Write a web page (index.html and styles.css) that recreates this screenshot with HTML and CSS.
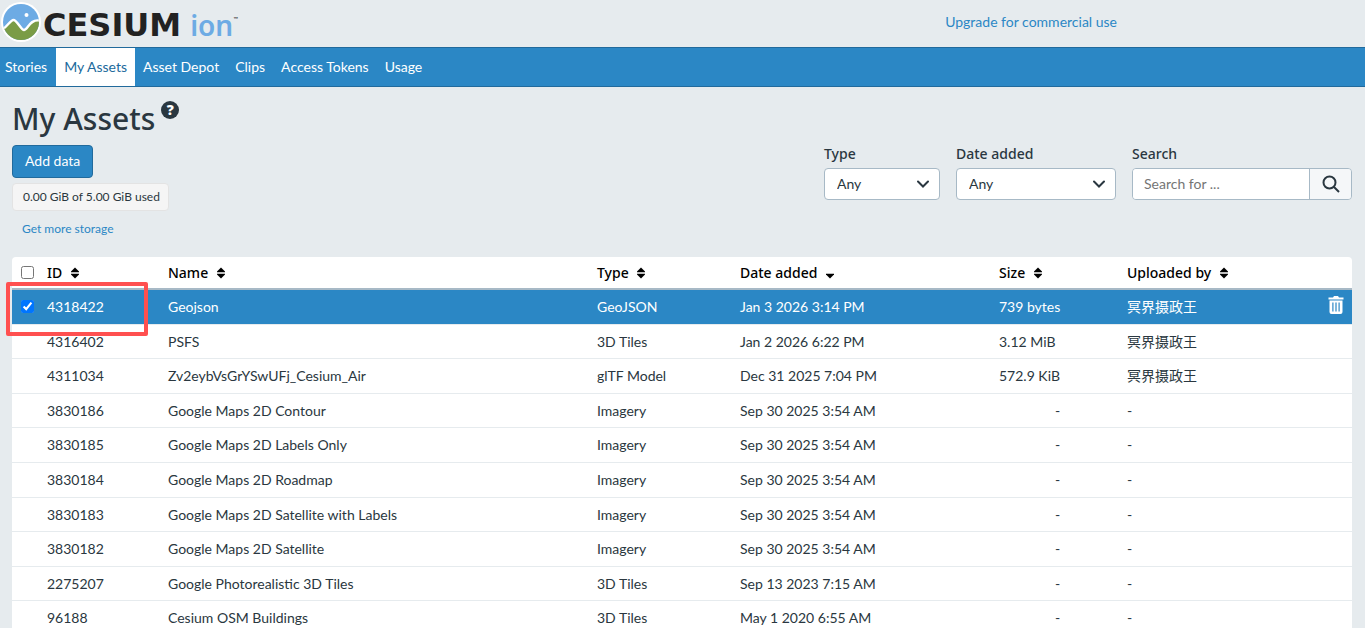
FILE: index.html
```html
<!DOCTYPE html>
<html lang="en">
<head>
    <meta charset="UTF-8">
    <meta name="viewport" content="width=device-width, initial-scale=1.0">
    <title>My Assets | Cesium ion</title>
    <link rel="stylesheet" href="styles.css">
</head>
<body>
    <!-- Shared icons -->
    <svg class="icon-defs" aria-hidden="true">
        <symbol id="icon-sort" viewBox="0 0 8 12">
            <path d="M4 0.5 L8 4.5 V5.2 H0 V4.5 Z M0 6.8 H8 V7.5 L4 11.5 L0 7.5 Z"/>
        </symbol>
        <symbol id="icon-sort-down" viewBox="0 0 8 12">
            <path d="M0 6.8 H8 V7.5 L4 11.5 L0 7.5 Z"/>
        </symbol>
    </svg>

    <header class="top-bar">
        <a class="logo" href="#" aria-label="Cesium ion">
            <svg class="logo-mark" viewBox="0 0 40 40" aria-hidden="true">
                <defs>
                    <clipPath id="globe"><circle cx="20" cy="20" r="18"/></clipPath>
                </defs>
                <circle cx="20" cy="20" r="20" fill="#fff"/>
                <g clip-path="url(#globe)">
                    <rect width="40" height="40" fill="#6dabe4"/>
                    <path d="M0 28 C5 27 9 18 12.5 18 C16 18 20 28 23 28 C26.500 28 29 17 38 18.500 L40 40 H0 Z" fill="#7a9c46"/>
                    <path d="M0 28 C5 27 9 18 12.5 18 C16 18 20 28 23 28 C26.500 28 29 17 38 18.500" fill="none" stroke="#fff" stroke-width="2.4"/>
                </g>
                <circle cx="25.500" cy="13" r="2" fill="#fff"/>
            </svg>
            <span class="logo-name">CESIUM</span>
            <span class="logo-product">ion</span>
            <span class="logo-tm">™</span>
        </a>
        <a class="upgrade-link" href="#">Upgrade for commercial use</a>
    </header>

    <nav class="main-nav">
        <a href="#">Stories</a>
        <a class="active" href="#">My Assets</a>
        <a href="#">Asset Depot</a>
        <a href="#">Clips</a>
        <a href="#">Access Tokens</a>
        <a href="#">Usage</a>
    </nav>

    <main class="content">
        <div class="page-title">
            <h1>My Assets</h1>
            <button class="help-btn" type="button" aria-label="Help">?</button>
        </div>

        <div class="toolbar">
            <div class="storage">
                <button class="add-btn" type="button">Add data</button>
                <span class="usage">0.00 GiB of 5.00 GiB used</span>
                <a class="more-link" href="#">Get more storage</a>
            </div>
            <form class="filters">
                <div class="form-group type-group">
                    <label for="type">Type</label>
                    <div class="select-box">
                        <select id="type"><option>Any</option></select>
                        <svg viewBox="0 0 12 8" aria-hidden="true"><path d="M1 1.5 L6 6.5 L11 1.5"/></svg>
                    </div>
                </div>
                <div class="form-group date-group">
                    <label for="date">Date added</label>
                    <div class="select-box">
                        <select id="date"><option>Any</option></select>
                        <svg viewBox="0 0 12 8" aria-hidden="true"><path d="M1 1.5 L6 6.5 L11 1.5"/></svg>
                    </div>
                </div>
                <div class="form-group search-group">
                    <label for="search">Search</label>
                    <div class="search-box">
                        <input type="text" id="search" placeholder="Search for ...">
                        <button type="submit" aria-label="Search">
                            <svg viewBox="0 0 18 18" aria-hidden="true"><circle cx="7.5" cy="7.5" r="6"/><path d="M12 12 L17 17"/></svg>
                        </button>
                    </div>
                </div>
            </form>
        </div>

        <div class="assets">
            <table>
                <colgroup>
                    <col class="col-check">
                    <col class="col-id">
                    <col class="col-name">
                    <col class="col-type">
                    <col class="col-date">
                    <col class="col-size">
                    <col class="col-user">
                    <col class="col-action">
                </colgroup>
                <thead>
                    <tr>
                        <th class="check"><input type="checkbox" aria-label="Select all"></th>
                        <th>ID <svg class="sort"><use href="#icon-sort"/></svg></th>
                        <th>Name <svg class="sort"><use href="#icon-sort"/></svg></th>
                        <th>Type <svg class="sort"><use href="#icon-sort"/></svg></th>
                        <th>Date added <svg class="sort"><use href="#icon-sort-down"/></svg></th>
                        <th>Size <svg class="sort"><use href="#icon-sort"/></svg></th>
                        <th>Uploaded by <svg class="sort"><use href="#icon-sort"/></svg></th>
                        <th></th>
                    </tr>
                </thead>
                <tbody>
                    <tr class="selected">
                        <td class="check"><input type="checkbox" aria-label="Select Geojson" checked></td>
                        <td>4318422</td>
                        <td>Geojson</td>
                        <td>GeoJSON</td>
                        <td>Jan 3 2026 3:14 PM</td>
                        <td>739 bytes</td>
                        <td>冥界摄政王</td>
                        <td class="action">
                            <button class="delete-btn" type="button" aria-label="Delete">
                                <svg viewBox="0 0 16 18" aria-hidden="true">
                                    <path d="M0.5 1.5 H5 L6 0 H10 L11 1.5 H15.5 V3.5 H0.5 Z"/>
                                    <path fill-rule="evenodd" d="M1.5 4.5 H14.5 V16 Q14.5 18 12.5 18 H3.5 Q1.5 18 1.5 16 Z M4.3 6.5 V15.5 H5.5 V6.5 Z M7.4 6.5 V15.5 H8.6 V6.5 Z M10.5 6.5 V15.5 H11.7 V6.5 Z"/>
                                </svg>
                            </button>
                        </td>
                    </tr>
                    <tr><td></td><td>4316402</td><td>PSFS</td><td>3D Tiles</td><td>Jan 2 2026 6:22 PM</td><td>3.12 MiB</td><td>冥界摄政王</td><td></td></tr>
                    <tr><td></td><td>4311034</td><td>Zv2eybVsGrYSwUFj_Cesium_Air</td><td>glTF Model</td><td>Dec 31 2025 7:04 PM</td><td>572.9 KiB</td><td>冥界摄政王</td><td></td></tr>
                    <tr><td></td><td>3830186</td><td>Google Maps 2D Contour</td><td>Imagery</td><td>Sep 30 2025 3:54 AM</td><td class="empty">-</td><td>-</td><td></td></tr>
                    <tr><td></td><td>3830185</td><td>Google Maps 2D Labels Only</td><td>Imagery</td><td>Sep 30 2025 3:54 AM</td><td class="empty">-</td><td>-</td><td></td></tr>
                    <tr><td></td><td>3830184</td><td>Google Maps 2D Roadmap</td><td>Imagery</td><td>Sep 30 2025 3:54 AM</td><td class="empty">-</td><td>-</td><td></td></tr>
                    <tr><td></td><td>3830183</td><td>Google Maps 2D Satellite with Labels</td><td>Imagery</td><td>Sep 30 2025 3:54 AM</td><td class="empty">-</td><td>-</td><td></td></tr>
                    <tr><td></td><td>3830182</td><td>Google Maps 2D Satellite</td><td>Imagery</td><td>Sep 30 2025 3:54 AM</td><td class="empty">-</td><td>-</td><td></td></tr>
                    <tr><td></td><td>2275207</td><td>Google Photorealistic 3D Tiles</td><td>3D Tiles</td><td>Sep 13 2023 7:15 AM</td><td class="empty">-</td><td>-</td><td></td></tr>
                    <tr><td></td><td>96188</td><td>Cesium OSM Buildings</td><td>3D Tiles</td><td>May 1 2020 6:55 AM</td><td class="empty">-</td><td>-</td><td></td></tr>
                </tbody>
            </table>
            <!-- Frame around the selected ID -->
            <div class="highlight"></div>
        </div>
    </main>
</body>
</html>
```
FILE: styles.css
```css
* {
    box-sizing: border-box;
}
html {
    scrollbar-width: none;
}
body {
    margin: 0;
    font-family: Lato, "Noto Sans CJK SC", sans-serif;
    font-size: 14px;
    line-height: 1.4;
    color: #2a3740;
    background-color: #e6ebee;
}
a {
    color: #2b87c5;
    text-decoration: none;
}
button, input, select {
    font: inherit;
    color: inherit;
}
button {
    cursor: pointer;
}
.icon-defs {
    display: none;
}

/* Top bar */
.top-bar {
    display: flex;
    justify-content: space-between;
    align-items: center;
    height: 47px;
    padding: 0 248px 3px 1px;
}
.logo {
    display: flex;
    align-items: center;
    color: #222;
}
.logo-mark {
    width: 40px;
    height: 40px;
    margin-right: 2px;
}
.logo-name {
    padding-top: 6px;
    font-family: "DejaVu Sans", sans-serif;
    font-size: 32px;
    font-weight: bold;
    line-height: 38px;
}
.logo-product {
    margin-left: 9px;
    padding-top: 6px;
    font-family: "Noto Sans", sans-serif;
    font-size: 28px;
    font-weight: 600;
    line-height: 38px;
    color: #6dabe4;
}
.logo-tm {
    align-self: flex-start;
    font-size: 6px;
    line-height: 38px;
}

/* Navigation */
.main-nav {
    display: flex;
    height: 40px;
    background-color: #2b87c5;
    border-top: 1px solid #216a9c;
    border-bottom: 1px solid #216a9c;
}
.main-nav a {
    padding: 0 8px;
    line-height: 38px;
    color: #fff;
}
.main-nav a:first-child {
    padding-left: 5px;
    padding-right: 9px;
}
.main-nav a.active {
    background-color: #fff;
    color: #216a9c;
}

/* Page head */
.content {
    padding: 12px 13px 0 12px;
}
.page-title {
    display: flex;
    align-items: flex-start;
    gap: 6px;
}
.page-title h1 {
    margin: 0;
    font-family: "Noto Sans", sans-serif;
    font-size: 30px;
    font-weight: 500;
    line-height: 40px;
}
.help-btn {
    width: 18px;
    height: 18px;
    margin-top: 2px;
    padding: 0;
    border: none;
    border-radius: 50%;
    background-color: #2a3740;
    color: #fff;
    font-family: "Noto Sans", sans-serif;
    font-size: 14px;
    font-weight: 900;
    line-height: 18px;
}
.toolbar {
    display: flex;
    justify-content: space-between;
    align-items: flex-start;
    padding-top: 6px;
}
.storage {
    display: flex;
    flex-direction: column;
    align-items: flex-start;
}
.add-btn {
    height: 33px;
    padding: 0 12px 1px;
    border: 1px solid #216a9c;
    border-radius: 4px;
    background-color: #2b87c5;
    color: #fff;
}
.usage {
    margin-top: 5px;
    padding: 0 8px 0 10px;
    border: 1px solid #e3e3e3;
    border-radius: 4px;
    background-color: #f5f5f5;
    font-size: 12px;
    line-height: 26px;
}
.more-link {
    padding: 8px 10px 0;
    font-size: 12px;
    line-height: 20px;
}

/* Filters */
.filters {
    display: flex;
    gap: 16px;
}
.form-group label {
    display: block;
    margin-bottom: 5px;
    font-family: "Noto Sans", sans-serif;
    font-weight: 500;
    line-height: 18px;
}
.type-group {
    width: 116px;
}
.date-group {
    width: 160px;
}
.search-group {
    width: 220px;
}
.select-box {
    position: relative;
}
.select-box select {
    display: block;
    width: 100%;
    height: 32px;
    padding: 0 12px;
    border: 1px solid #a7b9c6;
    border-radius: 4px;
    background-color: #fff;
    appearance: none;
}
.select-box svg {
    position: absolute;
    top: 12px;
    right: 11px;
    width: 12px;
    height: 8px;
    fill: none;
    stroke: #2a3740;
    stroke-width: 2;
    stroke-linecap: round;
    pointer-events: none;
}
.search-box {
    display: flex;
    height: 32px;
    border: 1px solid #a7b9c6;
    border-radius: 4px;
    overflow: hidden;
}
.search-box input {
    flex: 1;
    min-width: 0;
    padding: 0 11px;
    border: none;
    background-color: #fff;
}
.search-box input::placeholder {
    color: #757575;
}
.search-box button {
    display: flex;
    align-items: center;
    justify-content: center;
    width: 42px;
    padding: 0;
    border: none;
    border-left: 1px solid #a7b9c6;
    background-color: #f5f7f9;
}
.search-box svg {
    width: 18px;
    height: 18px;
    fill: none;
    stroke: #2a3740;
    stroke-width: 2;
}

/* Assets table */
.assets {
    position: relative;
    margin-top: 18px;
}
table {
    width: 100%;
    table-layout: fixed;
    border-spacing: 0;
    border-radius: 4px 4px 0 0;
    background-color: #fff;
}
.col-check {
    width: 27px;
}
.col-id {
    width: 121px;
}
.col-type {
    width: 143px;
}
.col-date {
    width: 259px;
}
.col-size {
    width: 128px;
}
.col-user {
    width: 193px;
}
.col-action {
    width: 40px;
}
th, td {
    padding: 7px 8px;
    border-bottom: 1px solid #e6ebee;
    text-align: left;
    white-space: nowrap;
}
th {
    height: 33px;
    padding: 0 8px;
    border-bottom: 2px solid #a7b9c6;
    font-family: "Noto Sans", sans-serif;
    font-weight: 500;
    color: #000;
}
.sort {
    width: 8px;
    height: 12px;
    margin-left: 5px;
    vertical-align: -1px;
}
.check {
    padding: 0 0 0 9px;
}
.check input {
    display: block;
    width: 13px;
    height: 13px;
    margin: 0;
}
.empty {
    padding-left: 64px;
}
.selected td {
    background-color: #2b87c5;
    color: #fff;
}
.action {
    padding: 0 8px 4px;
}
.delete-btn {
    display: block;
    margin-left: auto;
    padding: 0;
    border: none;
    background: none;
}
.delete-btn svg {
    display: block;
    width: 16px;
    height: 18px;
    fill: #fff;
}
.highlight {
    position: absolute;
    top: 25px;
    left: -6px;
    width: 142px;
    height: 54px;
    border: 4px solid #ff5050;
    border-radius: 2px;
    pointer-events: none;
}
```
